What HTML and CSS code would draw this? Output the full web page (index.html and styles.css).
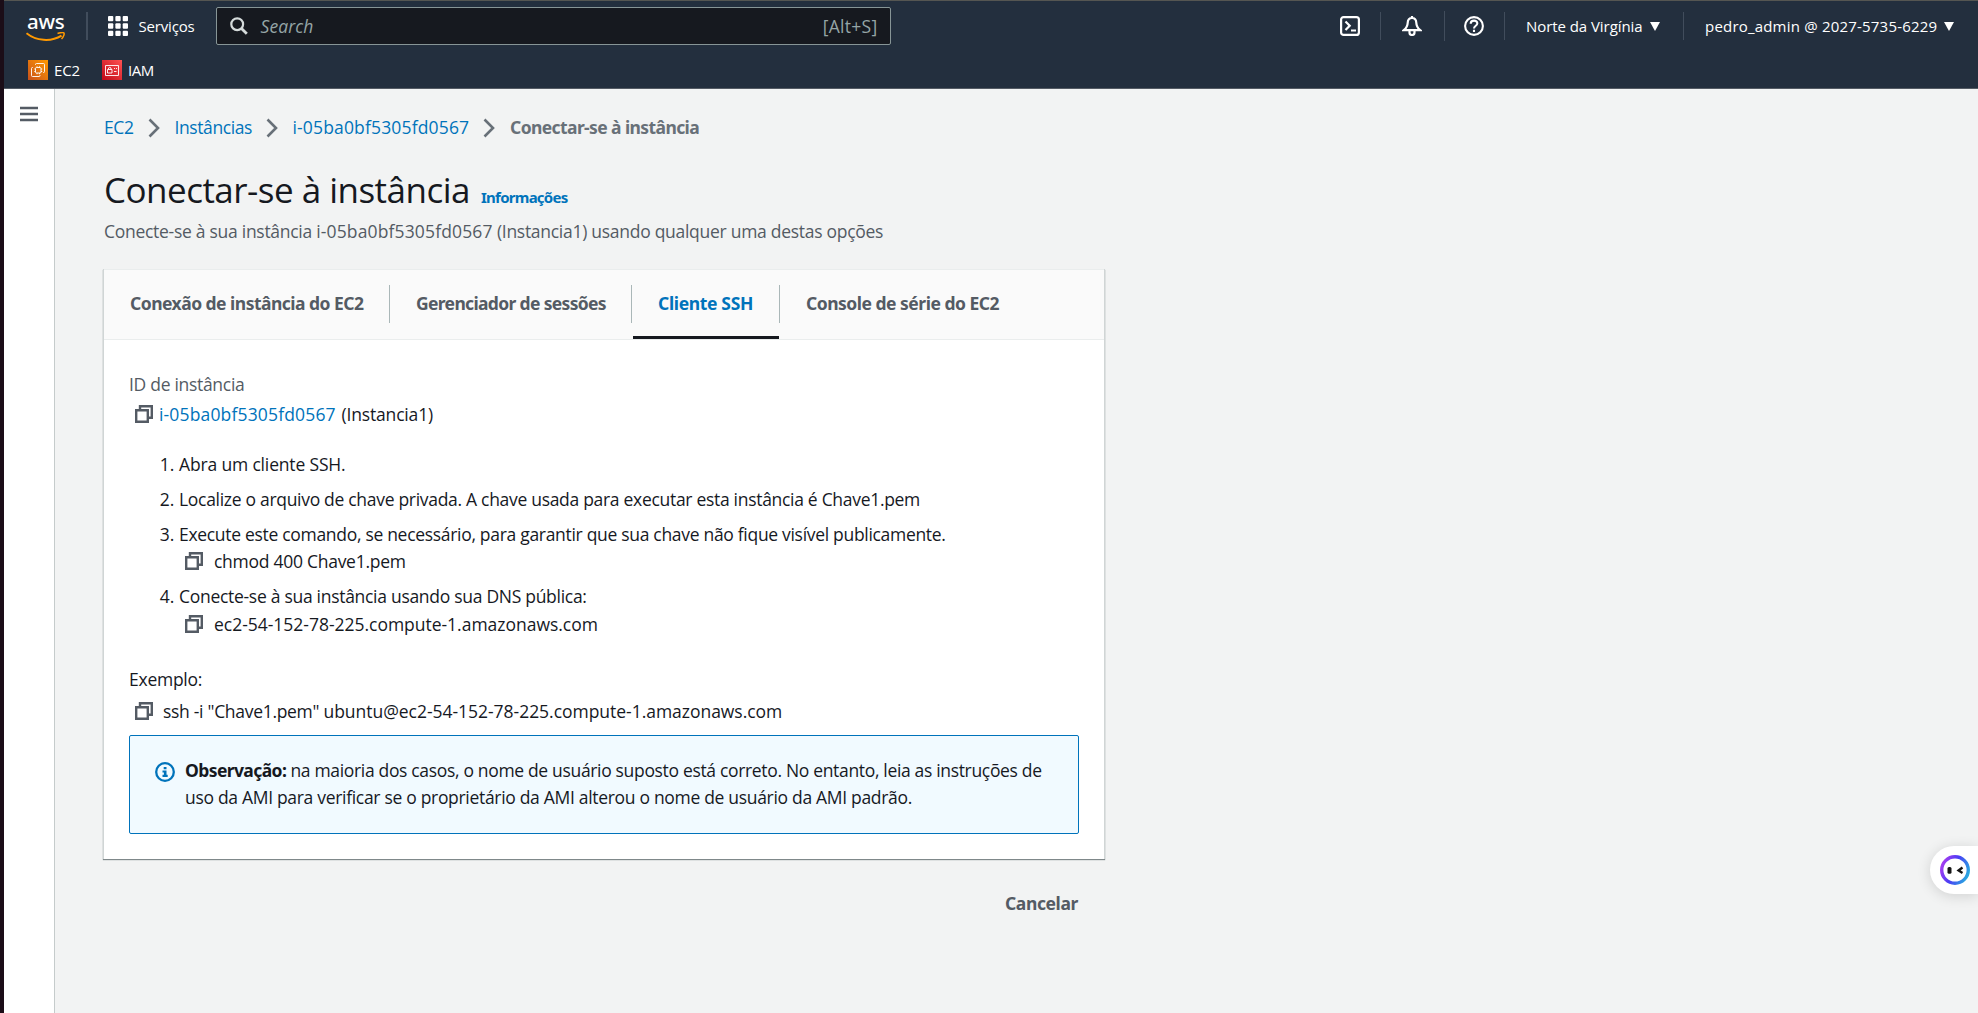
FILE: index.html
```html
<!DOCTYPE html>
<html lang="pt">
<head>
<meta charset="utf-8">
<title>Conectar-se à instância | EC2</title>
<link rel="stylesheet" href="styles.css">
</head>
<body>
<svg width="0" height="0" class="defs" aria-hidden="true">
  <defs>
    <symbol id="copy" viewBox="0 0 18 18"><path d="M1.200 5.200h11.600v11.600H1.200zM5 5V1.200h11.800v11.600H13" fill="none" stroke="#545b64" stroke-width="2.400"/></symbol>
    <symbol id="chevron" viewBox="0 0 12 20"><path d="M1.500 1.500 10 10l-8.500 8.500" fill="none" stroke="#687078" stroke-width="2.600"/></symbol>
    <linearGradient id="orange" x1="0" y1="1" x2="1" y2="0"><stop stop-color="#c8511b"/><stop offset="1" stop-color="#f90"/></linearGradient>
    <linearGradient id="red" x1="0" y1="1" x2="1" y2="0"><stop stop-color="#bd0816"/><stop offset="1" stop-color="#ff5252"/></linearGradient>
    <linearGradient id="ring" x1="0" y1="0.300" x2="1" y2="0.700"><stop stop-color="#a43df0"/><stop offset=".45" stop-color="#4a3df5"/><stop offset="1" stop-color="#28a9e0"/></linearGradient>
  </defs>
</svg>
<div class="app">
  <header class="header">
    <div class="topbar">
      <div class="logo">
        <span class="logo-text">aws</span>
        <svg width="40" height="10" viewBox="0 0 40 10">
          <path d="M.5 1.200C10 9 25 10.200 35.500 3.600" fill="none" stroke="#f90" stroke-width="2"/>
          <path d="M31.500 1.500c3-1 6-1.200 6.500-.4s-.3 3.700-2.500 6" fill="none" stroke="#f90" stroke-width="1.500"/>
        </svg>
      </div>
      <span class="sep sep-wide"></span>
      <svg class="grid-icon" width="20" height="20" viewBox="0 0 20 20" fill="#fff">
        <rect width="5.300" height="5.300" rx="1"/><rect x="7.350" width="5.300" height="5.300" rx="1"/><rect x="14.700" width="5.300" height="5.300" rx="1"/>
        <rect y="7.350" width="5.300" height="5.300" rx="1"/><rect x="7.350" y="7.350" width="5.300" height="5.300" rx="1"/><rect x="14.700" y="7.350" width="5.300" height="5.300" rx="1"/>
        <rect y="14.700" width="5.300" height="5.300" rx="1"/><rect x="7.350" y="14.700" width="5.300" height="5.300" rx="1"/><rect x="14.700" y="14.700" width="5.300" height="5.300" rx="1"/>
      </svg>
      <span class="services">Serviços</span>
      <div class="search">
        <svg width="18" height="18" viewBox="0 0 18 18" fill="none" stroke="#d5dbdb"><circle cx="7.200" cy="7.200" r="5.900" stroke-width="2.200"/><path d="m11.500 11.500 5.300 5.300" stroke-width="2.800"/></svg>
        <span class="placeholder">Search</span>
        <span class="shortcut">[Alt+S]</span>
      </div>
      <div class="tools">
        <svg width="20" height="20" viewBox="0 0 20 20" fill="none" stroke="#fff" stroke-width="2.200"><rect x="1.100" y="1.100" width="17.800" height="17.800" rx="2.500"/><path d="m5.500 5.500 4.200 4.200-4.200 4.300M11 14.500h5"/></svg>
        <span class="sep sep-a"></span>
        <svg width="20" height="20" viewBox="0 0 20 20" fill="none" stroke="#fff" stroke-width="2.200"><path d="M10 0v2M10 2c-3 0-4.200 2-4.300 4.800C5.600 10.200 4.500 12 1.800 14.200h16.400C15.500 12 14.400 10.200 14.300 6.800 14.200 4 13 2 10 2zM7.500 14.500v2a2.500 2.500 0 0 0 5 0v-2"/></svg>
        <span class="sep sep-b"></span>
        <svg width="20" height="20" viewBox="0 0 20 20" fill="none" stroke="#fff" stroke-width="2.100"><circle cx="10" cy="10" r="8.900"/><path d="M6.700 7.800c0-4.300 6.800-4 6.600-.3-.1 2.300-3.300 2.300-3.300 5M10 13.700V16"/></svg>
        <span class="sep sep-c"></span>
        <span class="region">Norte da Virgínia</span>
        <svg class="caret" width="10" height="9" viewBox="0 0 10 9"><path d="M0 0h10L5 9z" fill="#fff"/></svg>
        <span class="sep sep-d"></span>
        <span class="account">pedro_admin @ 2027-5735-6229</span>
        <svg class="caret" width="10" height="9" viewBox="0 0 10 9"><path d="M0 0h10L5 9z" fill="#fff"/></svg>
      </div>
    </div>
    <nav class="favorites">
      <svg width="20" height="20" viewBox="0 0 20 20"><rect width="20" height="20" fill="url(#orange)"/><path d="M7.500 8.500q0-1 1-1H12q1 0 1 1V12q0 1-1 1H8.500q-1 0-1-1zM9 6.300v1.200M11.500 6.300v1.200M9 13v1.200M11.500 13v1.200M6.300 9h1.200M6.300 11.500h1.200M13 9h1.200M13 11.500h1.200M7.500 5V4.500q0-1 1-1h7q1 0 1 1v7q0 1-1 1H15M5 7.500h-.5q-1 0-1 1v7q0 1 1 1h6.500q1 0 1-1V15" fill="none" stroke="#fff" stroke-opacity=".9"/></svg>
      <span class="fav-ec2">EC2</span>
      <svg width="20" height="20" viewBox="0 0 20 20"><rect width="20" height="20" fill="url(#red)"/><path d="M3.500 5.500h13v10h-13zM5.500 9.500h4.500v3.500H5.500zM6.500 9.500V8q1.200-1.300 2.500 0v1.500M12 8.500h1M14 8.500h1M12 11.500h2.500" fill="none" stroke="#fff" stroke-width=".9"/></svg>
      <span class="fav-iam">IAM</span>
    </nav>
  </header>
  <div class="body">
    <aside class="sidebar">
      <svg width="18" height="16" viewBox="0 0 18 16"><path d="M0 2h18M0 8h18M0 14h18" stroke="#545b64" stroke-width="2.300"/></svg>
    </aside>
    <main class="main">
      <nav class="crumbs">
        <a class="c-ec2">EC2</a><svg class="chev" width="12" height="20"><use href="#chevron"/></svg>
        <a class="c-inst">Instâncias</a><svg class="chev" width="12" height="20"><use href="#chevron"/></svg>
        <a class="c-id">i-05ba0bf5305fd0567</a><svg class="chev" width="12" height="20"><use href="#chevron"/></svg>
        <strong class="c-here">Conectar-se à instância</strong>
      </nav>
      <div class="title"><h1>Conectar-se à instância</h1><a class="info">Informações</a></div>
      <p class="subtitle">Conecte-se à sua instância <span class="sub-id">i-05ba0bf5305fd0567</span> (Instancia1) usando qualquer uma destas opções</p>
      <section class="card">
        <div class="tabs">
          <div class="tab t1"><span>Conexão de instância do EC2</span></div>
          <div class="tab t2"><span>Gerenciador de sessões</span></div>
          <div class="tab t3 active"><span>Cliente SSH</span></div>
          <div class="tab t4"><span>Console de série do EC2</span></div>
        </div>
        <div class="panel">
          <p class="label">ID de instância</p>
          <p class="row id-row"><svg width="18" height="18"><use href="#copy"/></svg><a class="c-id">i-05ba0bf5305fd0567</a><span class="paren">(Instancia1)</span></p>
          <ol class="steps">
            <li><span class="s1">Abra um cliente SSH.</span></li>
            <li><span class="s2">Localize o arquivo de chave privada. A chave usada para executar esta instância é Chave1.pem</span></li>
            <li><span class="s3">Execute este comando, se necessário, para garantir que sua chave não fique visível publicamente.</span>
              <div class="row cmd"><svg width="18" height="18"><use href="#copy"/></svg><span class="s4">chmod 400 Chave1.pem</span></div></li>
            <li><span class="s5">Conecte-se à sua instância usando sua DNS pública:</span>
              <div class="row cmd dns"><svg width="18" height="18"><use href="#copy"/></svg><span class="s6">ec2-54-152-78-225.compute-1.amazonaws.com</span></div></li>
          </ol>
          <p class="example">Exemplo:</p>
          <p class="row ssh"><svg width="18" height="18"><use href="#copy"/></svg><span class="s7"><span class="s7a">ssh -i "Chave1.pem" </span>ubuntu@ec2-54-152-78-225.compute-1.amazonaws.com</span></p>
          <div class="alert">
            <svg width="20" height="20" viewBox="0 0 20 20"><circle cx="10" cy="10" r="8.800" fill="none" stroke="#0073bb" stroke-width="2.300"/><path d="M8.700 5h2.800v2.300H8.700zM7.500 8.500h4v4.300h1.200V15H7.500v-2.200h1.400v-2.200H7.500z" fill="#0073bb"/></svg>
            <p><span class="s8"><strong>Observação:</strong> na maioria dos casos, o nome de usuário suposto está correto. No entanto, leia as instruções de</span><br><span class="s9">uso da AMI para verificar se o proprietário da AMI alterou o nome de usuário da AMI padrão.</span></p>
          </div>
        </div>
      </section>
      <div class="actions"><a class="cancel">Cancelar</a></div>
    </main>
  </div>
  <div class="assistant">
    <svg width="30" height="30" viewBox="0 0 30 30"><circle cx="15" cy="15" r="13.300" fill="#fff" stroke="url(#ring)" stroke-width="3.400"/><rect x="7.500" y="12" width="4" height="6.800" rx="1.500" fill="#151515"/><path d="m22.500 12.500-4 3 4 2.500" fill="none" stroke="#151515" stroke-width="2.300"/></svg>
  </div>
</div>
</body>
</html>
```
FILE: styles.css
```css
* { box-sizing: border-box; }
body {
  margin: 0;
  font-family: "Open Sans", "Noto Sans", sans-serif;
  font-size: 17.5px;
  line-height: 28px;
  color: #16191f;
  background: #f2f3f3;
  overflow: hidden;
}
p, h1, ol { margin: 0; padding: 0; }
svg { display: block; flex: none; }
span, a, strong { white-space: nowrap; }
a { color: #0073bb; }
strong { font-family: "Noto Sans", sans-serif; font-weight: 700; }
.defs { position: absolute; }
.app { position: relative; height: 1013px; border-left: 4px solid #1b0d17; display: flex; flex-direction: column; }

.header { height: 89px; background: #232f3e; border-top: 1px solid #555652; border-bottom: 1px solid #545b64; color: #fff; font-size: 15px; flex: none; }
.topbar { display: flex; align-items: center; height: 50px; padding-left: 22px; }
.logo { width: 40px; height: 34px; }
.logo-text { display: block; height: 23px; padding-left: 1px; font: 500 20.5px/24px "Noto Sans", sans-serif; letter-spacing: -.3px; }
.sep { width: 1px; height: 28px; background: #414d5c; flex: none; }
.sep-wide { width: 2px; margin: 0 20px 0 20px; }
.services { width: 57px; margin: 0 20px 0 10.5px; letter-spacing: -.177px; }
.search { display: flex; align-items: center; width: 675px; height: 38px; padding: 0 12px 0 13px; border: 1px solid #879596; border-radius: 2px; background: #16191f; color: #95a5a6; font-size: 17.5px; }
.placeholder { margin-left: 13px; font-style: italic; letter-spacing: .1px; }
.shortcut { margin-left: auto; letter-spacing: .3px; }
.tools { display: flex; align-items: center; margin-left: auto; padding-right: 24px; }
.sep-a { margin: 0 21px 0 20px; }
.sep-b { margin: 0 19px 0 22px; height: 30px; }
.sep-c { margin: 0 21px 0 20px; }
.region { width: 117px; letter-spacing: -.06px; margin-right: 7px; }
.sep-d { margin: 0 21px 0 23px; }
.account { width: 232px; letter-spacing: .2px; margin-right: 7px; }
.favorites { display: flex; align-items: center; height: 20px; margin-top: 9px; padding-left: 24px; }
.fav-ec2 { width: 48px; margin-left: 6px; letter-spacing: -.2px; }
.fav-iam { margin-left: 6px; letter-spacing: -.4px; }

.body { display: flex; flex: 1; min-height: 0; }
.sidebar { width: 51px; padding: 17px 0 0 16px; background: #fff; border-right: 1px solid #c5cbcb; }
.main { width: 1050px; padding: 24px 0 0 48px; }
.crumbs { display: flex; align-items: center; height: 28px; padding-left: 1px; }
.chev { margin: 2px 15px 0 14px; }
.c-ec2 { width: 29.5px; letter-spacing: -.4px; }
.c-inst { width: 77px; letter-spacing: -.4px; }
.c-id { width: 176.5px; letter-spacing: .16px; }
.c-here { color: #687078; letter-spacing: -.6px; }
.title { display: flex; align-items: baseline; margin-top: 27px; padding-left: 1px; height: 44px; }
h1 { width: 377px; font-size: 35px; font-weight: 400; line-height: 44px; letter-spacing: -.52px; white-space: nowrap; }
.info { font: 700 15px/20px "Noto Sans", sans-serif; letter-spacing: -.744px; }
.subtitle { margin-top: 5px; padding-left: 1px; color: #545b64; letter-spacing: -.28px; white-space: nowrap; }
.sub-id { letter-spacing: .14px; }

.card { width: 1002px; height: 590px; margin-top: 24px; background: #fff; border-left: 1px solid #d0d5d5; border-right: 1px solid #d0d5d5; box-shadow: 0 1px 1px #7f888a; }
.tabs { display: flex; height: 71px; padding-top: 15px; background: #fafafa; border-top: 1px solid #eaeded; border-bottom: 1px solid #eaeded; }
.tab { position: relative; height: 38px; padding: 4px 0 0 26px; border-right: 1px solid #aab7b8; color: #545b64; font: 700 17.5px/28px "Noto Sans", sans-serif; }
.t1 { width: 286px; letter-spacing: -.519px; }
.t2 { width: 242px; letter-spacing: -.662px; }
.t3 { width: 148px; letter-spacing: -.343px; }
.t4 { border: 0; letter-spacing: -.496px; }
.active { color: #0073bb; }
.active::after { content: ""; position: absolute; left: 1px; right: 0; bottom: -16px; height: 3px; background: #16191f; }

.panel { padding: 30px 25px 0; }
.label { color: #545b64; letter-spacing: -.3px; }
.row { display: flex; align-items: center; height: 28px; }
.id-row { margin-top: 2px; padding-left: 6px; }
.id-row .c-id { margin: 0 6px; }
.paren { letter-spacing: -.17px; }
.steps { margin-top: 22px; padding-left: 50px; }
.steps li { margin-bottom: 7px; }
.cmd { margin-top: -1px; padding-left: 6px; gap: 11px; }
.dns { margin-top: 0; }
.s1 { letter-spacing: -.16px; }
.s2 { letter-spacing: -.3px; }
.s3 { letter-spacing: -.305px; }
.s4 { letter-spacing: -.27px; }
.s5 { letter-spacing: -.29px; }
.s6 { letter-spacing: -.02px; }
.s7 { letter-spacing: -.03px; }
.s7a { letter-spacing: -.3px; white-space: pre; }
.s8 { letter-spacing: -.33px; }
.s8 strong { letter-spacing: -.6px; }
.s9 { letter-spacing: -.31px; }
.example { margin-top: 27px; letter-spacing: -.25px; }
.ssh { margin-top: 4px; padding-left: 6px; gap: 10px; }
.alert { display: flex; gap: 10px; height: 99px; margin-top: 10px; padding: 21px 0 0 25px; border: 1px solid #0073bb; border-radius: 2px; background: #f1faff; line-height: 27px; }
.alert svg { margin-top: 5px; }
.actions { display: flex; justify-content: flex-end; margin-top: 30px; padding-right: 27px; width: 1002px; }
.cancel { width: 73px; color: #545b64; font: 700 17.5px/28px "Noto Sans", sans-serif; letter-spacing: -.4px; }
.assistant { position: absolute; right: 0; top: 846px; width: 48px; height: 48px; padding: 9px 0 0 10px; border-radius: 24px 0 0 24px; background: #fff; box-shadow: 0 2px 14px rgba(0, 0, 0, .14); }
```
